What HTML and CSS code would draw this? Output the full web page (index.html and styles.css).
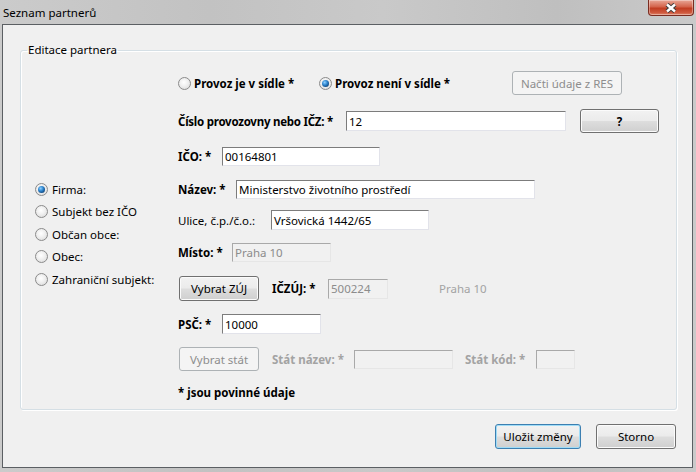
FILE: index.html
```html
<!DOCTYPE html>
<html lang="cs">
<head>
<meta charset="utf-8">
<title>Seznam partnerů</title>
<link rel="stylesheet" href="styles.css">
</head>
<body>
<div class="window">
  <div class="titlebar">
    <span class="title">Seznam partnerů</span>
    <span class="close">
      <svg width="14" height="10" viewBox="0 0 14 10">
        <path d="M3 1.5 L11 8.5 M11 1.5 L3 8.5" stroke="#3b3b3b" stroke-width="4.4" fill="none"/>
        <path d="M3 1.5 L11 8.5 M11 1.5 L3 8.5" stroke="#ffffff" stroke-width="2.4" fill="none"/>
      </svg>
    </span>
  </div>
  <div class="client">
    <fieldset class="group">
      <legend>Editace partnera</legend>
      <div class="layout">
        <div class="types">
          <div class="opt"><span class="radio on"></span>Firma:</div>
          <div class="opt"><span class="radio"></span>Subjekt bez IČO</div>
          <div class="opt"><span class="radio"></span>Občan obce:</div>
          <div class="opt"><span class="radio"></span>Obec:</div>
          <div class="opt"><span class="radio"></span>Zahraniční subjekt:</div>
        </div>
        <div class="form">
          <div class="row h38">
            <div class="choice c1"><span class="radio"></span><b>Provoz je v sídle *</b></div>
            <div class="choice c2"><span class="radio on"></span><b>Provoz není v sídle *</b></div>
            <span class="btn disabled w110 h24">Načti údaje z RES</span>
          </div>
          <div class="row h38">
            <span class="lbl bold tight l168">Číslo provozovny nebo IČZ: *</span>
            <span class="field w220 h20">12</span>
            <span class="btn bold w79 h24 ml14">?</span>
          </div>
          <div class="row h33">
            <span class="lbl bold l44">IČO: *</span>
            <span class="field w158 h19">00164801</span>
          </div>
          <div class="row h33">
            <span class="lbl bold l58">Název: *</span>
            <span class="field w299 h19">Ministerstvo životního prostředí</span>
          </div>
          <div class="row h28">
            <span class="lbl l93">Ulice, č.p./č.o.:</span>
            <span class="field w158 h20">Vršovická 1442/65</span>
          </div>
          <div class="row h37">
            <span class="lbl bold l54">Místo: *</span>
            <span class="field off w99 h19">Praha 10</span>
          </div>
          <div class="row h35">
            <span class="btn w80 h25 ml1">Vybrat ZÚJ</span>
            <span class="lbl bold l56 ml13">IČZÚJ: *</span>
            <span class="field off w60 h20">500224</span>
            <span class="note">Praha 10</span>
          </div>
          <div class="row h36">
            <span class="lbl bold l44">PSČ: *</span>
            <span class="field w99 h20">10000</span>
          </div>
          <div class="row h34">
            <span class="btn disabled w80 h24 ml1">Vybrat stát</span>
            <span class="lbl bold gray l82 ml13">Stát název: *</span>
            <span class="field off w99 h19"></span>
            <span class="lbl bold gray l71 ml12">Stát kód: *</span>
            <span class="field off w39 h19"></span>
          </div>
          <div class="row h32">
            <b>* jsou povinné údaje</b>
          </div>
        </div>
      </div>
    </fieldset>
    <div class="actions">
      <span class="btn default w86 h25">Uložit změny</span>
      <span class="btn w80 h25">Storno</span>
    </div>
  </div>
</div>
</body>
</html>
```
FILE: styles.css
```css
html, body {
  margin: 0;
  padding: 0;
}
body {
  width: 696px;
  height: 472px;
  overflow: hidden;
  font-family: "Noto Sans", "Open Sans", "DejaVu Sans", sans-serif;
  font-size: 11.5px;
  color: #000;
}
.window {
  width: 696px;
  height: 472px;
  display: flex;
  flex-direction: column;
  background: linear-gradient(to right, #cbcbcb, #c2c2c2 30%, #c9c9c9 55%, #bfbfbf 80%, #cacaca);
}
.titlebar {
  height: 24px;
  display: flex;
  align-items: flex-start;
  flex: none;
}
.title {
  padding: 5px 0 0 3px;
  line-height: 16px;
  font-size: 11.5px;
}
.close {
  margin-left: auto;
  margin-right: 2px;
  width: 46px;
  height: 16px;
  box-sizing: border-box;
  border: 1px solid #7a2c20;
  border-top: none;
  border-radius: 0 0 4px 4px;
  background: linear-gradient(#e8a797, #d4644c 45%, #c13d22 55%, #cf5a3f 85%, #e08a70);
  display: flex;
  align-items: center;
  justify-content: center;
  box-shadow: inset 0 0 0 1px rgba(255,255,255,0.35);
}
.client {
  margin: 0 3px 0 2px;
  height: 442px;
  border: 1px solid #5b5f63;
  background: #f0f0f0;
  display: flex;
  flex-direction: column;
  flex: none;
}
.group {
  margin: 17px 15px 0 17px;
  padding: 6px 0 1px 6px;
  border: 1px solid #d5dfe5;
  border-radius: 3px;
  box-shadow: inset 1px 1px 0 #fff, 1px 1px 0 #fff;
  min-width: 0;
}
.group legend {
  padding: 0 1px;
  line-height: 16px;
  font-size: 11.5px;
}
.layout {
  display: grid;
  grid-template-columns: 151px 1fr;
}
.types {
  margin: 114px 0 0 8px;
}
.opt {
  height: 22.5px;
  display: flex;
  align-items: center;
  gap: 4px;
}
.radio {
  width: 13px;
  height: 13px;
  box-sizing: border-box;
  border-radius: 50%;
  border: 1px solid #8b8b8b;
  background: radial-gradient(circle at 45% 40%, #ffffff 0%, #f1f1f1 40%, #d6d6d6 100%);
  display: flex;
  align-items: center;
  justify-content: center;
  flex: none;
}
.radio.on::after {
  content: "";
  width: 7px;
  height: 7px;
  border-radius: 50%;
  background: radial-gradient(circle at 38% 35%, #8fd0ff 0%, #2f86cf 40%, #114a82 75%, #0b2f57 100%);
}
.row {
  display: flex;
  align-items: center;
}
.h38 { height: 38px; }
.h37 { height: 37px; }
.h36 { height: 36px; }
.h35 { height: 35px; }
.h34 { height: 34px; }
.h33 { height: 33px; }
.h32 { height: 32px; }
.h28 { height: 28px; }

.choice {
  display: flex;
  align-items: center;
  gap: 3px;
}
.c1 { width: 141px; }
.c2 { width: 193px; }

b, .bold { font-weight: 700; }
.tight { letter-spacing: -0.25px; }
.lbl { flex: none; white-space: nowrap; }
.gray { color: #a3a3a3; }
.l44 { width: 44px; }
.l54 { width: 54px; }
.l56 { width: 56px; }
.l58 { width: 58px; }
.l71 { width: 71px; }
.l82 { width: 82px; }
.l93 { width: 93px; }
.l168 { width: 168px; }
.ml1 { margin-left: 1px; }
.ml12 { margin-left: 12px; }
.ml13 { margin-left: 13px; }
.ml14 { margin-left: 14px; }

.field {
  box-sizing: border-box;
  display: flex;
  align-items: center;
  padding: 0 2px;
  background: #fff;
  border: 1px solid;
  border-color: #7c7c7c #e2e3ea #e2e3ea #7c7c7c;
  white-space: nowrap;
  overflow: hidden;
  flex: none;
}
.field.off {
  background: #f1f1f1;
  color: #8c8c8c;
  border-color: #a9a9a9 #e6e6e6 #e6e6e6 #a9a9a9;
}
.w39 { width: 39px; }
.w60 { width: 60px; }
.w79 { width: 79px; }
.w80 { width: 80px; }
.w86 { width: 86px; }
.w99 { width: 99px; }
.w110 { width: 110px; }
.w158 { width: 158px; }
.w220 { width: 220px; }
.w299 { width: 299px; }
.h19 { height: 19px; }
.h20 { height: 20px; }
.h24 { height: 24px; }
.h25 { height: 25px; }

.note {
  margin-left: 51px;
  color: #a3a3a3;
}

.btn {
  box-sizing: border-box;
  display: flex;
  align-items: center;
  justify-content: center;
  flex: none;
  border: 1px solid #707070;
  border-radius: 3px;
  background: linear-gradient(#f2f2f2 0%, #ebebeb 48%, #dddddd 52%, #cfcfcf 100%);
  box-shadow: inset 0 0 0 1px #fbfbfb;
  white-space: nowrap;
}
.btn.disabled {
  border-color: #adb2b5;
  background: #f4f4f4;
  color: #8d8d8d;
  box-shadow: none;
}
.btn.default {
  border-color: #3c7fb1;
  box-shadow: inset 0 0 0 1px #9fdcf7;
}

.actions {
  display: flex;
  justify-content: flex-end;
  gap: 15px;
  margin-top: 14px;
  padding-right: 16px;
}
```
